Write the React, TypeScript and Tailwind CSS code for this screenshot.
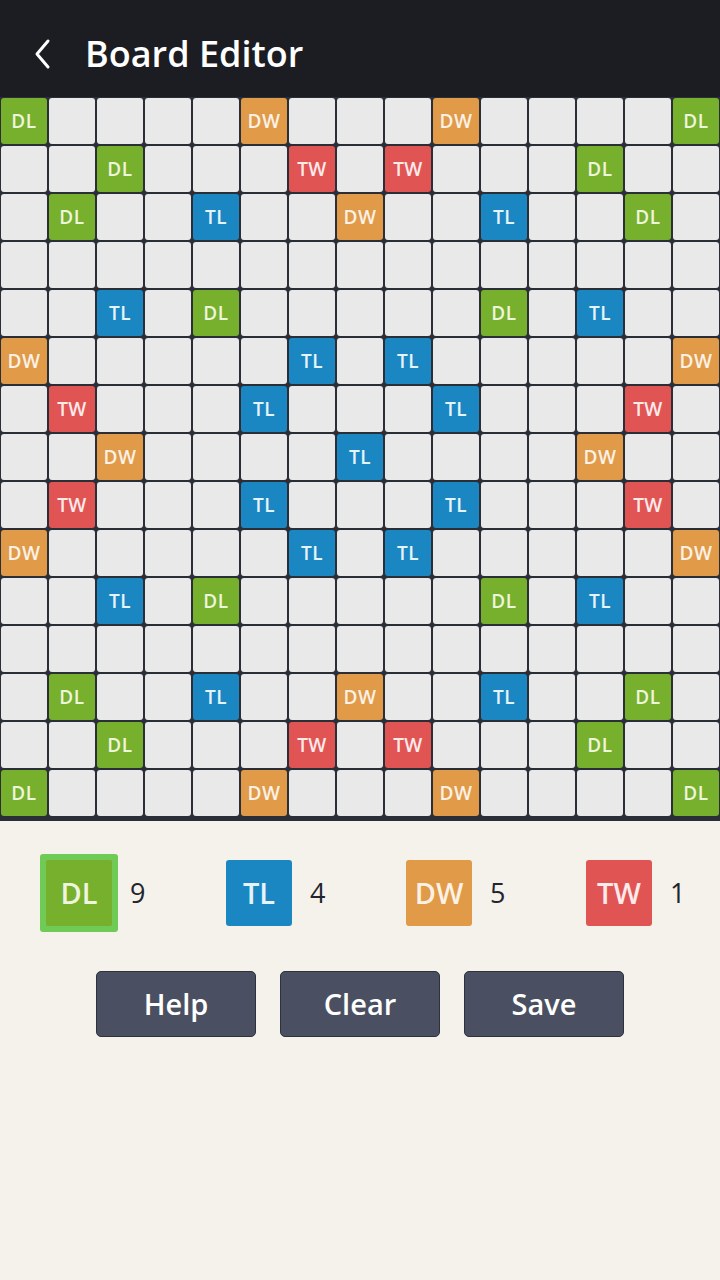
import React from 'react';

type Bonus = 'DL' | 'TL' | 'DW' | 'TW' | '';

const layout: Record<string, Bonus> = {};
const place = (kind: Bonus, cells: [number, number][]) => {
  cells.forEach(([r, c]) => {
    layout[`${r}-${c}`] = kind;
  });
};

place('DL', [
  [0, 0], [0, 14], [1, 2], [1, 12], [2, 1], [2, 13], [4, 4], [4, 10],
  [10, 4], [10, 10], [12, 1], [12, 13], [13, 2], [13, 12], [14, 0], [14, 14],
]);
place('TL', [
  [2, 4], [2, 10], [4, 2], [4, 12], [5, 6], [5, 8], [6, 5], [6, 9], [7, 7],
  [8, 5], [8, 9], [9, 6], [9, 8], [10, 2], [10, 12], [12, 4], [12, 10],
]);
place('DW', [
  [0, 5], [0, 9], [2, 7], [5, 0], [5, 14], [7, 2], [7, 12], [9, 0], [9, 14],
  [12, 7], [14, 5], [14, 9],
]);
place('TW', [
  [1, 6], [1, 8], [6, 1], [6, 13], [8, 1], [8, 13], [13, 6], [13, 8],
]);

const colors: Record<string, string> = {
  DL: 'bg-[#76b02c] text-[#eef5dc]',
  TL: 'bg-[#1b87c2] text-[#e6f3fb]',
  DW: 'bg-[#e09a48] text-[#fbf1e4]',
  TW: 'bg-[#e15454] text-[#fdeaea]',
  '': 'bg-[#e9e9ea]',
};

function Cell({ kind }: { kind: Bonus }) {
  return (
    <div className="w-12 h-12 p-[1px]">
      <div
        className={`w-full h-full rounded-[3px] flex items-center justify-center text-[19px] font-semibold tracking-[0.5px] ${colors[kind]}`}
      >
        {kind}
      </div>
    </div>
  );
}

const legend: { kind: Bonus; count: number }[] = [
  { kind: 'DL', count: 9 },
  { kind: 'TL', count: 4 },
  { kind: 'DW', count: 5 },
  { kind: 'TW', count: 1 },
];

export default function App() {
  const rows = Array.from({ length: 15 }, (_, r) => r);

  return (
    <div
      className="w-[720px] h-[1280px] bg-[#f5f2ec] flex flex-col"
      style={{ fontFamily: '"Open Sans", "Noto Sans", sans-serif' }}
    >
      {/* Header */}
      <div className="h-[97px] bg-[#1b1d23] flex items-center pt-[11px] text-white">
        <svg width="20" height="32" viewBox="0 0 20 32" className="ml-[33px]">
          <path d="M15 3 L4 16 L15 29" fill="none" stroke="white" strokeWidth="3" strokeLinecap="round" strokeLinejoin="round" />
        </svg>
        <h1 className="ml-[32px] text-[36px] font-semibold leading-none">Board Editor</h1>
      </div>

      {/* Board */}
      <div className="bg-[#2a2e36] pb-[4px]">
        {rows.map((r) => (
          <div key={r} className="flex">
            {rows.map((c) => (
              <Cell key={c} kind={layout[`${r}-${c}`] || ''} />
            ))}
          </div>
        ))}
      </div>

      {/* Legend */}
      <div className="flex pl-[40px] mt-[33px] overflow-hidden">
        {legend.map((item, i) => (
          <div key={item.kind} className="w-[180px] shrink-0 flex items-center">
            {i === 0 ? (
              <div className="w-[78px] h-[78px] rounded-[3px] bg-[#6fcb55] p-[6px]">
                <div className={`w-full h-full rounded-[2px] flex items-center justify-center text-[29px] font-semibold ${colors[item.kind]}`}>
                  {item.kind}
                </div>
              </div>
            ) : (
              <div className="w-[78px] h-[78px] flex items-center justify-center">
                <div className={`w-[66px] h-[66px] rounded-[3px] flex items-center justify-center text-[29px] font-semibold ${colors[item.kind]}`}>
                  {item.kind}
                </div>
              </div>
            )}
            <span className="ml-[12px] text-[27px] font-medium text-[#22252c]">{item.count}</span>
          </div>
        ))}
      </div>

      {/* Actions */}
      <div className="flex justify-center gap-6 mt-[39px]">
        {['Help', 'Clear', 'Save'].map((label) => (
          <button
            key={label}
            className="w-40 h-[66px] rounded-[5px] bg-[#4a5061] border border-[#2e323c] text-white text-[29px] font-semibold"
          >
            {label}
          </button>
        ))}
      </div>
    </div>
  );
}
